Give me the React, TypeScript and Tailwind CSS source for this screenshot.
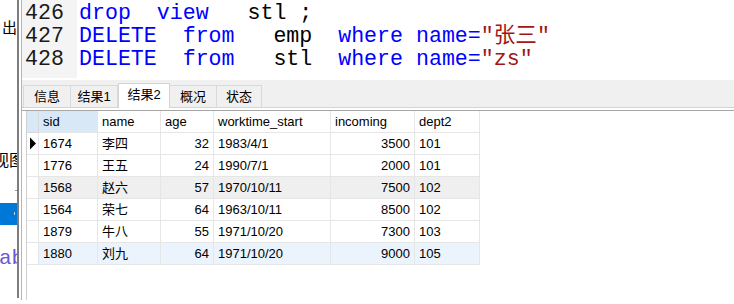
const MONO = "font-['Liberation_Mono','Noto_Sans_CJK_SC',monospace]";
const UI = "font-['Liberation_Sans','Noto_Sans_CJK_SC',sans-serif]";

type Row = {
  sid: string;
  name: string;
  age: string;
  start: string;
  incoming: string;
  dept: string;
};

const ROWS: Row[] = [
  { sid: '1674', name: '李四', age: '32', start: '1983/4/1', incoming: '3500', dept: '101' },
  { sid: '1776', name: '王五', age: '24', start: '1990/7/1', incoming: '2000', dept: '101' },
  { sid: '1568', name: '赵六', age: '57', start: '1970/10/11', incoming: '7500', dept: '102' },
  { sid: '1564', name: '荣七', age: '64', start: '1963/10/11', incoming: '8500', dept: '102' },
  { sid: '1879', name: '牛八', age: '55', start: '1971/10/20', incoming: '7300', dept: '103' },
  { sid: '1880', name: '刘九', age: '64', start: '1971/10/20', incoming: '9000', dept: '105' },
];

const TABS = ['信息', '结果1', '结果2', '概况', '状态'];
const TAB_W = ['w-[48px]', 'w-[47px]', 'w-[52px]', 'w-[47px]', 'w-[45px]'];

const COLS = 'grid grid-cols-[12px_59px_63px_53px_117px_84px_65px]';

function LeftStrip() {
  return (
    <div className="relative h-full w-[17px] shrink-0 overflow-hidden">
      <div className={`absolute left-[2px] top-[19px] whitespace-nowrap text-[15px] leading-[18px] text-black ${UI}`}>出表</div>
      <div className={`absolute left-[-7px] top-[151px] whitespace-nowrap text-[16px] leading-[20px] text-black ${UI}`}>视图</div>
      <div className="absolute left-[15px] top-[190px] h-px w-[2px] bg-[#9a9a9a]" />
      <div className="absolute left-0 top-[203px] h-[22px] w-full bg-[#0078d7]">
        <div className="absolute left-[14px] top-[9px] h-[3px] w-px bg-white/70" />
      </div>
      <div className={`absolute left-[-1px] top-[247px] whitespace-nowrap text-[21px] leading-[23px] text-[#6a55dc] ${MONO}`}>ab</div>
    </div>
  );
}

function Editor() {
  const kw = 'text-[#0000ff]';
  const str = 'text-[#a31515]';
  return (
    <div className="flex h-[78px] shrink-0">
      <div className={`w-[55px] shrink-0 bg-[#f4f4f4] pl-[3px] pt-[2px] text-[21.6px] leading-[23px] text-[#1a1a1a] ${MONO}`}>
        <div>426</div>
        <div>427</div>
        <div>428</div>
      </div>
      <div className={`flex-1 whitespace-pre pl-[2px] pt-[2px] text-[21.6px] leading-[23px] text-black ${MONO}`}>
        <div>
          <span className={kw}>drop</span>
          {'  '}
          <span className={kw}>view</span>
          {'   stl ;'}
        </div>
        <div>
          <span className={kw}>DELETE</span>
          {'  '}
          <span className={kw}>from</span>
          {'   emp  '}
          <span className={kw}>where</span>
          {' '}
          <span className={kw}>name=</span>
          <span className={str}>"张三"</span>
        </div>
        <div>
          <span className={kw}>DELETE</span>
          {'  '}
          <span className={kw}>from</span>
          {'   stl  '}
          <span className={kw}>where</span>
          {' '}
          <span className={kw}>name=</span>
          <span className={str}>"zs"</span>
        </div>
      </div>
    </div>
  );
}

function TabBar() {
  return (
    <div className={`flex h-[28px] shrink-0 items-end border-b border-[#d4d4d4] bg-[#f0f0f0] pl-px text-[13px] text-black ${UI}`}>
      {TABS.map((t, i) =>
        i === 2 ? (
          <div
            key={t}
            className={`${TAB_W[i]} -mb-px flex h-[25px] items-center justify-center border-x border-t border-[#d4d4d4] bg-white pb-[2px]`}
          >
            {t}
          </div>
        ) : (
          <div
            key={t}
            className={`${TAB_W[i]} flex h-[22px] items-center justify-center border-t border-[#d9d9d9] ${
              i === 0 ? 'border-l' : ''
            } border-r`}
          >
            {t}
          </div>
        ),
      )}
    </div>
  );
}

function Grid() {
  const cell = 'flex h-[22px] items-center border-b border-r border-[#e6e6e6] px-[4px]';
  return (
    <div className={`flex flex-1 flex-col text-[13px] text-black ${UI}`}>
      <div className="h-[2px]" />
      <div className="h-px bg-[#a6a6a6]" />
      <div className="flex flex-1">
        <div className="w-[4px]" />
        <div className="flex-1 border-l border-[#cfcfcf]">
          <div className={COLS}>
            <div className="h-[22px] border-b border-r border-[#d8d8d8] bg-[#d9e8f7]" />
            <div className={`${cell} border-[#d8d8d8] bg-[#d9e8f7]`}>sid</div>
            <div className={`${cell} border-[#d8d8d8]`}>name</div>
            <div className={`${cell} border-[#d8d8d8]`}>age</div>
            <div className={`${cell} border-[#d8d8d8]`}>worktime_start</div>
            <div className={`${cell} border-[#d8d8d8]`}>incoming</div>
            <div className={`${cell} border-[#d8d8d8]`}>dept2</div>
          </div>
          {ROWS.map((r, i) => {
            const bg = i === 2 ? 'bg-[#efefef]' : i === 5 ? 'bg-[#ebf3fd]' : 'bg-white';
            return (
              <div key={r.sid} className={COLS}>
                <div className="flex h-[22px] items-center border-b border-r border-[#e6e6e6] bg-white">
                  {i === 0 ? (
                    <svg width="8" height="13" viewBox="0 0 8 13" className="ml-[2px]">
                      <path d="M1 0.5 L7 6.5 L1 12.5 Z" fill="#000" />
                    </svg>
                  ) : null}
                </div>
                <div className={`${cell} ${bg}`}>{r.sid}</div>
                <div className={`${cell} ${bg}`}>{r.name}</div>
                <div className={`${cell} ${bg} justify-end`}>{r.age}</div>
                <div className={`${cell} ${bg}`}>{r.start}</div>
                <div className={`${cell} ${bg} justify-end`}>{r.incoming}</div>
                <div className={`${cell} ${bg}`}>{r.dept}</div>
              </div>
            );
          })}
        </div>
      </div>
      <div className="h-[4px]" />
    </div>
  );
}

export default function App() {
  return (
    <div className="flex h-[304px] w-[734px] overflow-hidden bg-white">
      <LeftStrip />
      <div className="h-[298px] w-[2px] shrink-0 bg-[#7d7d7d]" />
      <div className="w-[2px] shrink-0" />
      <div className="h-[300px] w-px shrink-0 bg-[#b4b4b4]" />
      <div className="flex min-w-0 flex-1 flex-col">
        <Editor />
        <div className="h-[2px] shrink-0" />
        <TabBar />
        <Grid />
      </div>
    </div>
  );
}
